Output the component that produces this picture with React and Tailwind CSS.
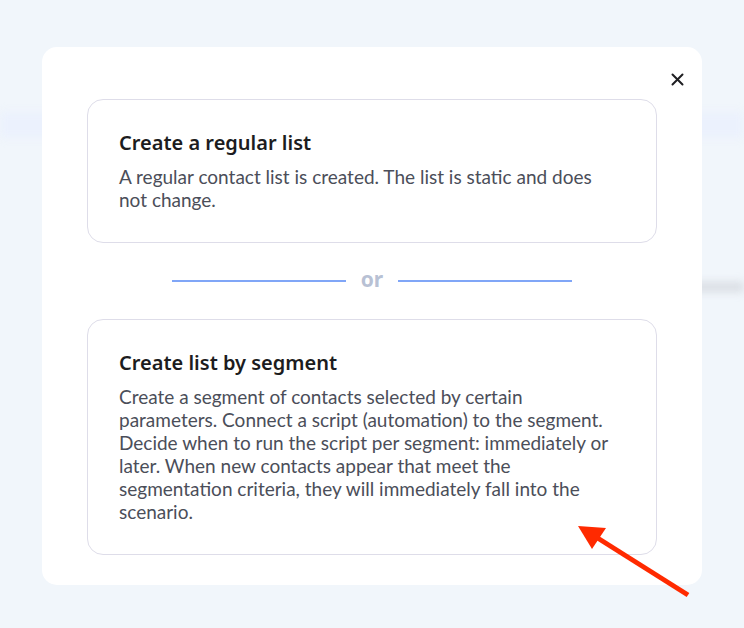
import React from 'react';

const Option = ({ title, children, className }) => (
  <div className={`rounded-[16px] border border-[#dedde9] bg-white pl-[31px] pr-[48px] pt-[29px] pb-[30px] ${className}`}>
    <h3 className="text-[20px] leading-[28px] font-semibold text-[#1c1c20]" style={{ fontFamily: '"Noto Sans", sans-serif' }}>
      {title}
    </h3>
    <p className="mt-2 text-[19px] leading-[23px] text-[#4b4e59]" style={{ fontFamily: 'Lato, sans-serif' }}>
      {children}
    </p>
  </div>
);

const App = () => {
  return (
    <div className="relative w-[744px] h-[628px] overflow-hidden bg-[#f1f6fb] flex justify-center pt-[47px]">
      {/* blurred page behind the modal */}
      <div className="absolute left-0 right-0 top-[112px] h-[26px] bg-[#ebf1fd] blur-[4px]" />
      <div className="absolute left-[690px] right-0 top-[282px] h-[10px] bg-[#d9dde3] blur-[4px]" />

      <div className="relative w-[660px] h-[538px] rounded-[15px] bg-white px-[45px] pt-[52px] pb-[30px] flex flex-col">
        <button className="absolute right-[17px] top-[24px] w-[16px] h-[16px] flex items-center justify-center">
          <svg width="13" height="13" viewBox="0 0 13 13">
            <path d="M1.5 1.5 L11.5 11.5 M11.5 1.5 L1.5 11.5" stroke="#1f1f22" strokeWidth="2" strokeLinecap="round" />
          </svg>
        </button>

        <Option title="Create a regular list" className="min-h-[144px]">
          A regular contact list is created. The list is static and does not change.
        </Option>

        <div className="h-[76px] flex items-center justify-center">
          <div className="w-[400px] flex items-center gap-[15px]">
            <div className="flex-1 h-[2px] bg-[#80a6f7]" />
            <span className="text-[21px] leading-none font-bold text-[#b8c1d4] pb-[3px]" style={{ fontFamily: '"Noto Sans", sans-serif' }}>
              or
            </span>
            <div className="flex-1 h-[2px] bg-[#80a6f7]" />
          </div>
        </div>

        <Option title="Create list by segment" className="min-h-[236px]">
          Create a segment of contacts selected by certain parameters. Connect a script (automation) to the segment. Decide when to run the script per segment: immediately or later. When new contacts appear that meet the segmentation criteria, they will immediately fall into the scenario.
        </Option>
      </div>

      <svg className="absolute left-0 top-0 pointer-events-none" width="744" height="628" viewBox="0 0 744 628">
        <line x1="688" y1="595" x2="596" y2="537" stroke="#ff2a00" strokeWidth="5" />
        <polygon points="578,526 606,528 592,549" fill="#ff2a00" />
      </svg>
    </div>
  );
};

export default App;
